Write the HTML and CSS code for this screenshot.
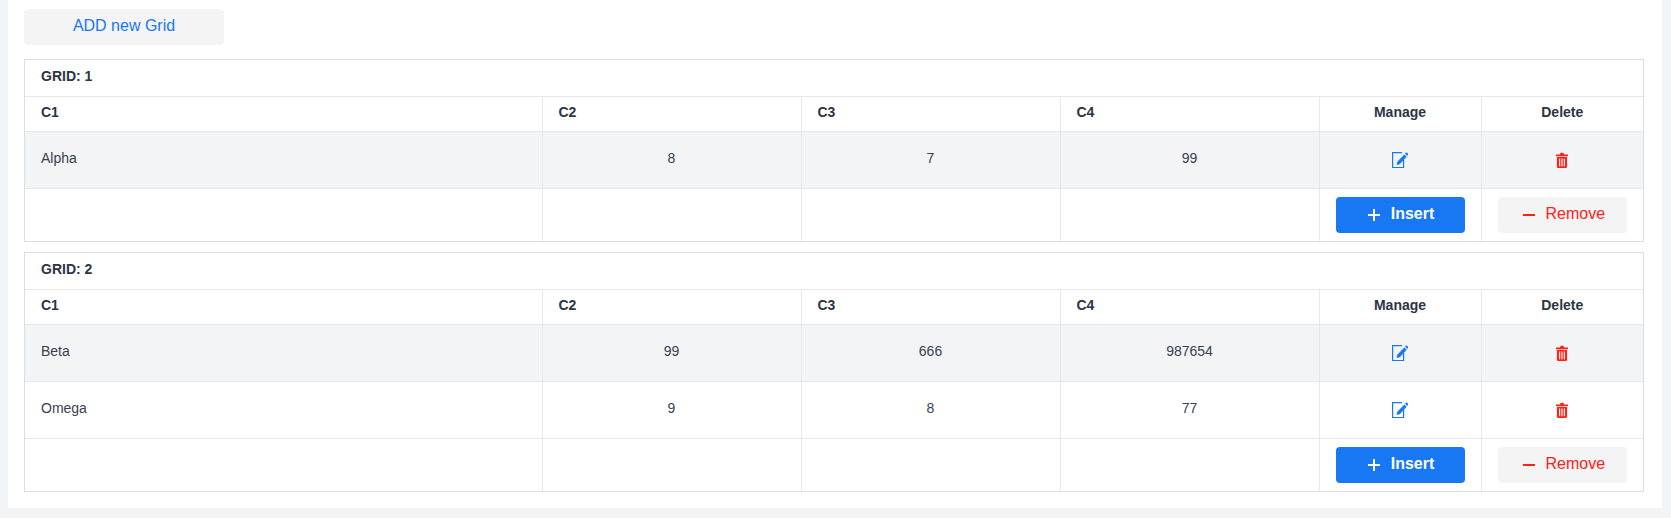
FILE: index.html

```html
<!DOCTYPE html>
<html lang="en">
<head>
  <meta charset="UTF-8" />
  <meta name="viewport" content="width=device-width, initial-scale=1.0"/>
  <title>Grids</title>
  <link rel="stylesheet" href="styles.css">
</head>
<body>
  <svg class="sprites" width="0" height="0" aria-hidden="true">
    <symbol id="icon-edit" viewBox="0 0 16 16">
      <path d="M10 .6H.6v15h11V8" fill="none" stroke="currentColor" stroke-width="1.2"/>
      <path d="M4.600 13l.7-3.200 7-7.400 2.400 2.400-7 7.400z" fill="currentColor"/>
      <path d="M13 1.600l1-1.100 1.700 .5 .3 1.900-.9 1z" fill="currentColor"/>
    </symbol>
    <symbol id="icon-trash" viewBox="0 0 12 16">
      <path d="M0 2.600h4l.5-1.800h3l.5 1.800h4v1.600H0z" fill="currentColor"/>
      <path d="M.9 5h10.200v9.500c0 .8-.6 1.500-1.400 1.500H2.300C1.500 16 .9 15.300 .9 14.500zM3 6.500v7.700h1.200V6.500zM5.400 6.500v7.700h1.200V6.500zM7.800 6.500v7.700H9V6.500z" fill="currentColor" fill-rule="evenodd"/>
    </symbol>
    <symbol id="icon-plus" viewBox="0 0 12 12">
      <path d="M5 0h2v5h5v2H7v5H5V7H0V5h5z" fill="currentColor"/>
    </symbol>
    <symbol id="icon-minus" viewBox="0 0 12 12">
      <path d="M0 5h12v2H0z" fill="currentColor"/>
    </symbol>
  </svg>

  <main class="card">
    <button class="btn btn-add">ADD new Grid</button>

    <div class="grid">
      <table>
        <colgroup>
          <col class="col-name"><col class="col-num"><col class="col-num"><col class="col-num"><col class="col-manage"><col class="col-delete">
        </colgroup>
        <tr class="title-row"><th colspan="6">GRID: 1</th></tr>
        <tr class="head-row">
          <th>C1</th><th>C2</th><th>C3</th><th>C4</th><th class="center">Manage</th><th class="center">Delete</th>
        </tr>
        <tr class="striped">
          <td>Alpha</td><td class="center">8</td><td class="center">7</td><td class="center">99</td>
          <td class="center"><svg class="icon icon-blue"><use href="#icon-edit"/></svg></td>
          <td class="center"><svg class="icon-bin icon-red"><use href="#icon-trash"/></svg></td>
        </tr>
        <tr class="action-row">
          <td></td><td></td><td></td><td></td>
          <td><button class="btn btn-insert"><svg class="btn-icon"><use href="#icon-plus"/></svg>Insert</button></td>
          <td><button class="btn btn-remove"><svg class="btn-icon"><use href="#icon-minus"/></svg>Remove</button></td>
        </tr>
      </table>
    </div>

    <div class="grid">
      <table>
        <colgroup>
          <col class="col-name"><col class="col-num"><col class="col-num"><col class="col-num"><col class="col-manage"><col class="col-delete">
        </colgroup>
        <tr class="title-row"><th colspan="6">GRID: 2</th></tr>
        <tr class="head-row">
          <th>C1</th><th>C2</th><th>C3</th><th>C4</th><th class="center">Manage</th><th class="center">Delete</th>
        </tr>
        <tr class="striped">
          <td>Beta</td><td class="center">99</td><td class="center">666</td><td class="center">987654</td>
          <td class="center"><svg class="icon icon-blue"><use href="#icon-edit"/></svg></td>
          <td class="center"><svg class="icon-bin icon-red"><use href="#icon-trash"/></svg></td>
        </tr>
        <tr>
          <td>Omega</td><td class="center">9</td><td class="center">8</td><td class="center">77</td>
          <td class="center"><svg class="icon icon-blue"><use href="#icon-edit"/></svg></td>
          <td class="center"><svg class="icon-bin icon-red"><use href="#icon-trash"/></svg></td>
        </tr>
        <tr class="action-row">
          <td></td><td></td><td></td><td></td>
          <td><button class="btn btn-insert"><svg class="btn-icon"><use href="#icon-plus"/></svg>Insert</button></td>
          <td><button class="btn btn-remove"><svg class="btn-icon"><use href="#icon-minus"/></svg>Remove</button></td>
        </tr>
      </table>
    </div>
  </main>
</body>
</html>
```

FILE: styles.css

```css
* { box-sizing: border-box; }
html, body { height: 100%; }
body { margin: 0; padding: 0 9px 10px 8px; background: #f3f4f6; font-family: "Liberation Sans", Arial, sans-serif; font-size: 14px; line-height: 20px; color: #374151; }
.sprites { position: absolute; }
.card { height: 100%; background: #fff; padding: 9px 18px 0 16px; }

.btn { display: flex; align-items: center; justify-content: center; height: 36px; padding: 0 0 2px; border: none; border-radius: 4px; font-family: inherit; font-size: 16px; cursor: pointer; }
.btn-add { width: 200px; margin-bottom: 14px; background: #f4f4f5; color: #1877f2; }
.btn-insert { width: 100%; padding-left: 2px; background: #1877f2; color: #fff; font-weight: bold; }
.btn-remove { width: 100%; padding-left: 4px; background: #f4f4f5; color: #ff2018; }
.btn-icon { width: 12px; height: 12px; margin-right: 11px; margin-top: 2px; }
.btn-remove .btn-icon { margin-right: 10px; }

.grid { border: 1px solid #dcdde1; margin-bottom: 10px; }
.grid table { width: 100%; border-collapse: collapse; table-layout: fixed; }
.col-name { width: 517px; }
.col-num { width: 259px; }
.col-manage { width: 162px; }
.col-delete { width: 162px; }

th, td { border: 1px solid #e5e7eb; padding: 16px; height: 57px; text-align: left; vertical-align: top; }
tr:first-child th { border-top: none; }
tr th:first-child, tr td:first-child { border-left: none; }
tr th:last-child, tr td:last-child { border-right: none; }
tr:last-child td { border-bottom: none; }
th { font-weight: bold; color: #2b3544; }
th.center, td.center { text-align: center; }

.title-row th { padding: 6px 16px; height: 36px; }
.head-row th { padding: 5px 16px 9px; height: 35px; }
.striped td { background: #f3f4f6; }
.action-row td { padding: 8px 16px; height: 53px; }

.icon, .icon-bin { display: inline-block; height: 16px; margin-top: 4px; vertical-align: top; }
.icon { width: 16px; }
.icon-bin { width: 12px; }
.icon-blue { color: #1877f2; }
.icon-red { color: #ff2018; }
```
